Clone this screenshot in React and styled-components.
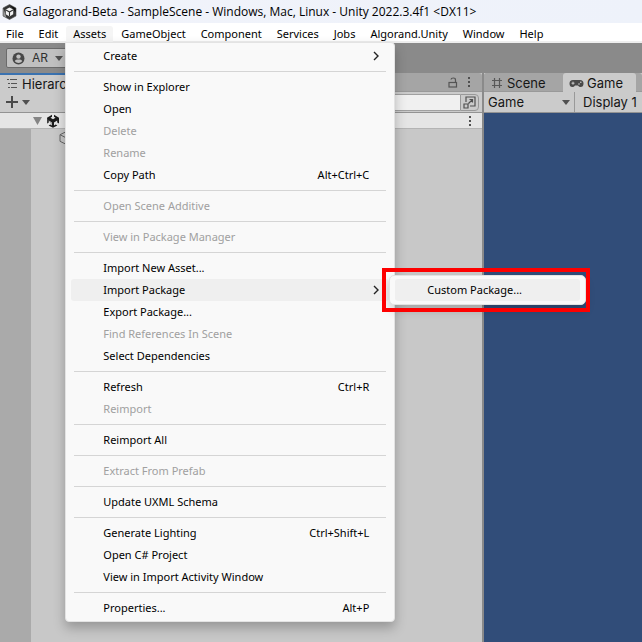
import React from "react";
import styled, { createGlobalStyle, css } from "styled-components";

const GlobalStyle = createGlobalStyle`
  *, *::before, *::after { box-sizing: border-box; }
  body { margin: 0; }
  button, input, select { font: inherit; color: inherit; margin: 0; }
`;

const uiFont = '"Noto Sans", "Open Sans", sans-serif';
const editorFont = 'Inter, Roboto, sans-serif';

const AppWindow = styled.div`
  display: flex;
  flex-direction: column;
  height: 100vh;
  overflow: hidden;
  background: #c8c8c8;
  color: #000;
  font: 11px/22px ${uiFont};
`;

const TitleBar = styled.header`
  display: flex;
  align-items: center;
  gap: 6px;
  height: 23px;
  flex: none;
  padding: 0 2px;
  background: linear-gradient(90deg, #f1f3fa, #eef2fa);
`;

const Title = styled.h1`
  margin: 0;
  font-family: "Open Sans", "Noto Sans", sans-serif;
  font-size: 12px;
  font-weight: 400;
  white-space: nowrap;
`;

const MenuBar = styled.ul`
  position: relative;
  z-index: 2;
  display: flex;
  gap: 1px;
  flex: none;
  height: 20px;
  margin: 0 0 0 -1px;
  padding: 0;
  list-style: none;
  background: #fff;
  border-bottom: 2px solid #eeeeee;
`;

const MenuBarItem = styled.li`
  position: relative;
`;

const MenuBarButton = styled.button`
  height: 18px;
  padding: 0 7px 2px;
  border: 0;
  line-height: 16px;
  white-space: nowrap;
  border-radius: 3px;
  background: ${(p) => (p.$open ? "#f5f5f5" : "transparent")};
`;

const panelSurface = css`
  position: absolute;
  margin: 0;
  list-style: none;
  background: #f9f9f9;
  border: 1px solid #e3e3e3;
`;

const Menu = styled.ul`
  ${panelSurface}
  top: 19px;
  left: -1px;
  width: 330px;
  padding: 2px 5px;
  border-radius: 0 4px 4px 4px;
  box-shadow: 0 6px 12px rgba(0, 0, 0, 0.25);
`;

const SubMenu = styled.ul`
  ${panelSurface}
  top: -4px;
  left: 100%;
  width: 197px;
  padding: 3px 5px;
  border-radius: 5px;
  box-shadow: 0 6px 10px rgba(0, 0, 0, 0.16);
`;

const MenuEntry = styled.li`
  position: relative;
`;

const MenuButton = styled.button`
  display: flex;
  align-items: center;
  justify-content: space-between;
  width: 100%;
  height: 22px;
  padding: 0 ${(p) => (p.$arrow ? 9 : 20)}px 0 32px;
  border: 0;
  border-radius: 3px;
  line-height: 22px;
  white-space: nowrap;
  background: ${(p) => (p.$active ? "#efefef" : "transparent")};

  &:disabled { color: #a0a0a0; }
`;

const Separator = styled.li`
  height: 1px;
  margin: 4px 3px;
  background: #d5d5d5;
`;

const Highlight = styled.div`
  position: absolute;
  inset: -8px -5px -8px -8px;
  border: 4px solid #fe0000;
  pointer-events: none;
`;

const MainToolbar = styled.div`
  display: flex;
  align-items: center;
  flex: none;
  height: 30px;
  padding: 0 6px;
  background: #8a8a8a;
  font: 12px/18px ${editorFont};
`;

const AccountButton = styled.button`
  display: flex;
  align-items: center;
  gap: 7px;
  height: 20px;
  padding: 0 6px 0 5px;
  border: 1px solid #6b6b6b;
  border-radius: 2px;
  background: #c0c0c0;
  color: #303030;
`;

const Workspace = styled.main`
  display: grid;
  grid-template-columns: 482fr 158fr;
  gap: 2px;
  flex: 1;
  min-height: 0;
  background: #8a8a8a;
  color: #161616;
  font: 13px/18px ${editorFont};
`;

const Panel = styled.section`
  display: flex;
  flex-direction: column;
  min-width: 0;
  overflow: hidden;
  background: #c8c8c8;
`;

const TabStrip = styled.div`
  display: flex;
  flex: none;
  height: 19px;
  background: #a5a5a5;
  border-radius: 3px 3px 0 0;
`;

const Tab = styled.button`
  display: flex;
  align-items: center;
  gap: 4px;
  flex: none;
  height: 19px;
  padding: ${(p) => (p.$focused ? "0 10px 0 6px" : "1px 7px 0 7px")};
  border: 0;
  border-top: ${(p) => (p.$focused ? "2px solid #3a72b0" : "0")};
  border-bottom: ${(p) => (p.$selected ? "0" : "1px solid #999")};
  border-radius: ${(p) => (p.$focused ? "0" : "3px 3px 0 0")};
  background: ${(p) => (p.$selected ? "#cbcbcb" : "#a5a5a5")};
  white-space: nowrap;
`;

const SceneTab = styled(Tab)`
  width: 79px;
`;

const GameTab = styled(Tab)`
  width: 73px;
  padding: 1px 5px 0 6px;
  gap: 3px;
`;

const StripEnd = styled.div`
  display: flex;
  align-items: center;
  justify-content: flex-end;
  gap: 8px;
  flex: 1;
  padding-right: 10px;
  border-bottom: 1px solid #999;
`;

const PanelToolbar = styled.div`
  display: flex;
  align-items: center;
  flex: none;
  height: 21px;
  background: #cbcbcb;
  border-bottom: 1px solid #939393;
`;

const IconButton = styled.button`
  display: flex;
  align-items: center;
  padding: 0;
  border: 0;
  background: transparent;
  color: #505050;
`;

const AddButton = styled(IconButton)`
  gap: 4px;
  padding-left: 6px;
`;

const SearchGroup = styled.div`
  display: flex;
  flex: 1;
  height: 17px;
  margin: 0 3px 0 40px;
`;

const SearchInput = styled.input`
  flex: 1;
  min-width: 0;
  border: 1px solid #a0a0a0;
  border-right: 0;
  border-radius: 3px 0 0 3px;
  background: #f0f0f0;
`;

const SearchPicker = styled(IconButton)`
  justify-content: center;
  width: 19px;
  border: 1px solid #999;
  border-radius: 0 4px 4px 0;
`;

const SceneRow = styled.div`
  display: flex;
  align-items: center;
  justify-content: space-between;
  flex: none;
  height: 16px;
  padding: 0 9px 0 33px;
  background: #e5e5e5;
  border-bottom: 1px solid #b4b4b4;
`;

const SceneLabel = styled.div`
  display: flex;
  align-items: center;
  gap: 4px;
`;

const Tree = styled.div`
  display: flex;
  flex: 1;
`;

const Gutter = styled.div`
  width: 31px;
  background: #aaaaaa;
`;

const TreeRow = styled.div`
  display: flex;
  align-items: center;
  height: 18px;
  padding-left: 28px;
`;

const ViewSelect = styled.select`
  width: 90px;
  height: 20px;
  padding: 0 4px;
  border: 0;
  appearance: none;
  background: transparent;
`;

const SelectWrap = styled.label`
  display: flex;
  align-items: center;
  position: relative;
  border-right: 1px solid #999;

  svg { position: absolute; right: 4px; pointer-events: none; }
`;

const DisplayButton = styled(IconButton)`
  padding-left: 8px;
  color: inherit;
  white-space: nowrap;
`;

const GameView = styled.div`
  flex: 1;
  background: #314d79;
`;

const Chevron = () => (
  <svg width="8" height="10" viewBox="0 0 8 10" fill="none" stroke="#222" strokeWidth="1.4">
    <path d="M2 1l4 4-4 4" />
  </svg>
);

const Caret = ({ size = 8, color = "#505050" }) => (
  <svg width={size} height={size === 8 ? 5 : 8} viewBox="0 0 8 5" preserveAspectRatio="none">
    <path d="M0 0h8L4 5z" fill={color} />
  </svg>
);

const Kebab = () => (
  <svg width="6" height="12" viewBox="0 0 6 12" fill="#505050">
    <rect x="2" y="1" width="2" height="2" />
    <rect x="2" y="5" width="2" height="2" />
    <rect x="2" y="9" width="2" height="2" />
  </svg>
);

const AppLogo = () => (
  <svg width="15" height="16" viewBox="0 0 15 16">
    <path d="M7.5 0.5L14 4v8l-6.500 3.500L1 12V4z" fill="#353535" stroke="#555" strokeWidth=".6" />
    <path d="M7.500 1L13.500 4.300v4L10 3.500z" fill="#111" />
    <path d="M1.300 4.300v7.500l3 1.700L3 9z" fill="#999" />
    <path d="M7.500 3.400l3.700 2.200v4.600l-3.700 2.200-3.700-2.200V5.600z" fill="#f2f2f2" />
    <path d="M7.500 8v4.200M7.500 8L4 6M7.500 8L11 6" stroke="#333" strokeWidth="1.100" />
  </svg>
);

const UnityIcon = () => (
  <svg width="14" height="14" viewBox="0 0 14 14">
    <path d="M6 .8v2L4.500 3.700 7 5.200l2.500-1.500L8 2.800v-2l5 2.900v5.800l-1.800-1V6.600L8 8.400v3l1.700-1 1.700 1L7 13.800l-4.400-2.400 1.700-1 1.700 1v-3L2.800 6.600v1.900L1 9.500V3.700z" fill="#1b1b1b" />
    <path d="M1 3.700v5.800l1.800-1V6.600L6 8.400v3" fill="#666" opacity=".5" />
  </svg>
);

const PersonIcon = () => (
  <svg width="13" height="13" viewBox="0 0 13 13">
    <circle cx="6.500" cy="6.500" r="6" fill="#484848" />
    <circle cx="6.500" cy="4.600" r="2.200" fill="#c0c0c0" />
    <path d="M2.800 9.300Q3.200 7.600 5 7.600h3q1.800 0 2.200 1.700Q8.800 11 6.500 11T2.800 9.300z" fill="#c0c0c0" />
  </svg>
);

const ListIcon = () => (
  <svg width="12" height="11" viewBox="0 0 12 11" fill="#555">
    <path d="M1 1h2v1H1zM4 1h7v1H4zM2 5h2v1H2zM5 5h6v1H5zM2 9h2v1H2zM5 9h6v1H5z" />
  </svg>
);

const PlusIcon = () => (
  <svg width="12" height="12" viewBox="0 0 12 12" stroke="#4a4a4a" strokeWidth="2">
    <path d="M6 0v12M0 6h12" />
  </svg>
);

const LockIcon = () => (
  <svg width="10" height="11" viewBox="0 0 10 11" fill="none" stroke="#555" strokeWidth="1.200">
    <rect x="1" y="5.500" width="7.500" height="4.500" />
    <path d="M7.500 5.500V3Q7.500 1 5.300 1T3 2.500" />
  </svg>
);

const PickerIcon = () => (
  <svg width="13" height="13" viewBox="0 0 13 13" fill="none" stroke="#505050" strokeWidth="1.200">
    <path d="M3 6V1h9v9H7M1 8h4v4H1zM5.500 7.500L9.500 3.500M6.500 3.500h3v3" />
  </svg>
);

const CubeIcon = () => (
  <svg width="13" height="14" viewBox="0 0 13 14" fill="none" stroke="#666">
    <path d="M6.500 1L12 3.700v6.600L6.500 13 1 10.300V3.700zM1 3.700l5.500 2.800L12 3.700M6.500 6.500V13" />
  </svg>
);

const GridIcon = () => (
  <svg width="12" height="12" viewBox="0 0 12 12" stroke="#585858" strokeWidth="1.200">
    <path d="M3.500 1v10M8.500 1v10M1 3.500h10M1 8.500h10" />
  </svg>
);

const GamepadIcon = () => (
  <svg width="15" height="9" viewBox="0 0 15 9">
    <path d="M4 1h7q3.500 0 3.500 3.500T11.500 8Q10 8 9 6.500H6Q5 8 3.500 8 .5 8 .5 4.500T4 1z" fill="#484848" />
    <path d="M4 2.700v3M2.500 4.200h3" stroke="#cbcbcb" strokeWidth="1" />
    <circle cx="10" cy="5" r=".8" fill="#cbcbcb" />
    <circle cx="11.800" cy="3.300" r=".8" fill="#cbcbcb" />
  </svg>
);

const menuNames = ["File", "Edit", "Assets", "GameObject", "Component", "Services", "Jobs", "Algorand.Unity", "Window", "Help"];

const groups = [
  [{ label: "Create", arrow: true }],
  [
    { label: "Show in Explorer" },
    { label: "Open" },
    { label: "Delete", off: true },
    { label: "Rename", off: true },
    { label: "Copy Path", keys: "Alt+Ctrl+C" },
  ],
  [{ label: "Open Scene Additive", off: true }],
  [{ label: "View in Package Manager", off: true }],
  [
    { label: "Import New Asset..." },
    { label: "Import Package", arrow: true, sub: ["Custom Package..."] },
    { label: "Export Package..." },
    { label: "Find References In Scene", off: true },
    { label: "Select Dependencies" },
  ],
  [{ label: "Refresh", keys: "Ctrl+R" }, { label: "Reimport", off: true }],
  [{ label: "Reimport All" }],
  [{ label: "Extract From Prefab", off: true }],
  [{ label: "Update UXML Schema" }],
  [
    { label: "Generate Lighting", keys: "Ctrl+Shift+L" },
    { label: "Open C# Project" },
    { label: "View in Import Activity Window" },
  ],
  [{ label: "Properties...", keys: "Alt+P" }],
];

function Entry({ item }) {
  return (
    <MenuEntry>
      <MenuButton disabled={item.off} $arrow={item.arrow} $active={!!item.sub}>
        <span>{item.label}</span>
        {item.keys && <span>{item.keys}</span>}
        {item.arrow && <Chevron />}
      </MenuButton>
      {item.sub && (
        <SubMenu>
          {item.sub.map((name) => (
            <MenuEntry key={name}>
              <MenuButton $active>{name}</MenuButton>
            </MenuEntry>
          ))}
          <Highlight as="li" aria-hidden="true" />
        </SubMenu>
      )}
    </MenuEntry>
  );
}

function AssetsMenu() {
  return (
    <Menu>
      {groups.map((group, i) => (
        <React.Fragment key={group[0].label}>
          {i > 0 && <Separator role="separator" />}
          {group.map((item) => <Entry key={item.label} item={item} />)}
        </React.Fragment>
      ))}
    </Menu>
  );
}

export default function App() {
  return (
    <AppWindow>
      <GlobalStyle />
      <TitleBar>
        <AppLogo />
        <Title>{"Galagorand-Beta - SampleScene - Windows, Mac, Linux - Unity 2022.3.4f1 <DX11>"}</Title>
      </TitleBar>
      <MenuBar>
        {menuNames.map((name) => (
          <MenuBarItem key={name}>
            <MenuBarButton $open={name === "Assets"}>{name}</MenuBarButton>
            {name === "Assets" && <AssetsMenu />}
          </MenuBarItem>
        ))}
      </MenuBar>
      <MainToolbar>
        <AccountButton><PersonIcon />AR<Caret /></AccountButton>
      </MainToolbar>
      <Workspace>
        <Panel>
          <TabStrip>
            <Tab $selected $focused><ListIcon />Hierarchy</Tab>
            <StripEnd>
              <IconButton aria-label="Lock"><LockIcon /></IconButton>
              <IconButton aria-label="Panel options"><Kebab /></IconButton>
            </StripEnd>
          </TabStrip>
          <PanelToolbar>
            <AddButton aria-label="Add"><PlusIcon /><Caret /></AddButton>
            <SearchGroup>
              <SearchInput aria-label="Search hierarchy" />
              <SearchPicker aria-label="Open search"><PickerIcon /></SearchPicker>
            </SearchGroup>
          </PanelToolbar>
          <SceneRow>
            <SceneLabel>
              <Caret size={9} color="#858585" />
              <UnityIcon />
            </SceneLabel>
            <IconButton aria-label="Scene options"><Kebab /></IconButton>
          </SceneRow>
          <Tree>
            <Gutter />
            <TreeRow><CubeIcon /></TreeRow>
          </Tree>
        </Panel>
        <Panel>
          <TabStrip>
            <SceneTab><GridIcon />Scene</SceneTab>
            <GameTab $selected><GamepadIcon />Game</GameTab>
            <StripEnd />
          </TabStrip>
          <PanelToolbar>
            <SelectWrap>
              <ViewSelect aria-label="View mode"><option>Game</option></ViewSelect>
              <Caret />
            </SelectWrap>
            <DisplayButton>Display 1</DisplayButton>
          </PanelToolbar>
          <GameView />
        </Panel>
      </Workspace>
    </AppWindow>
  );
}
